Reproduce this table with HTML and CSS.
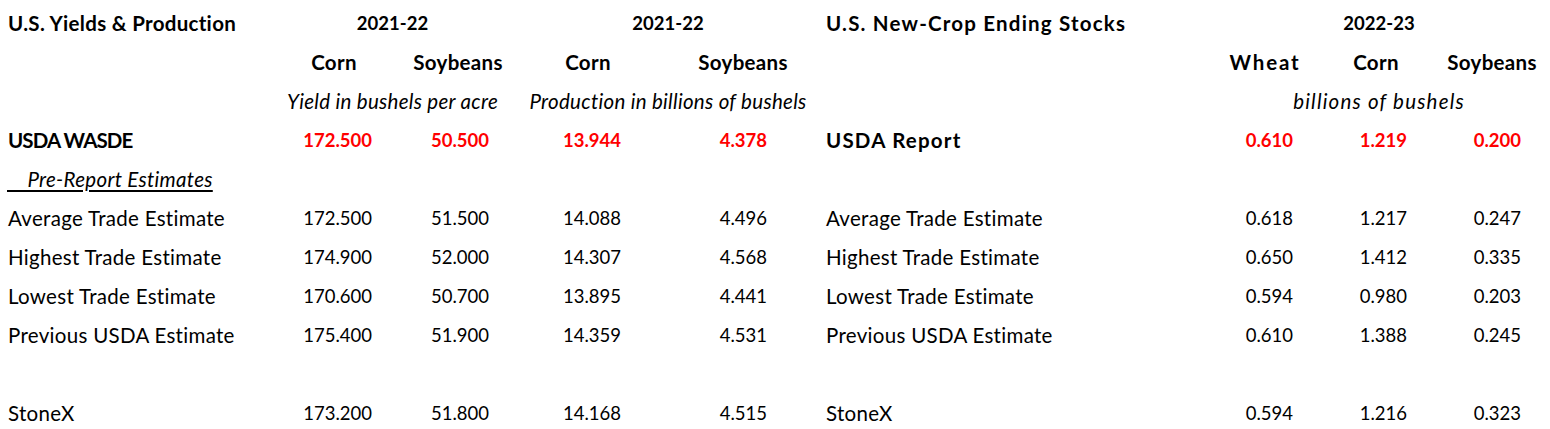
FILE: index.html
```html
<!DOCTYPE html>
<html lang="en">
<head>
<meta charset="utf-8">
<title>U.S. Yields &amp; Production / Ending Stocks</title>
<link rel="stylesheet" href="styles.css">
</head>
<body>
<div class="sheet">
  <div class="row">
    <div class="c-l1 bold">U.S. Yields &amp; Production</div>
    <div class="span-y bold hd yr">2021-22</div>
    <div class="span-p bold hd yr shift">2021-22</div>
    <div class="c-l2 bold wide">U.S. New-Crop Ending Stocks</div>
    <div class="span-s bold hd yr">2022-23</div>
  </div>
  <div class="row">
    <div class="c-y1 bold hd">Corn</div>
    <div class="c-y2 bold hd">Soybeans</div>
    <div class="c-p1 bold hd">Corn</div>
    <div class="c-p2 bold hd">Soybeans</div>
    <div class="c-w bold hd wheat">Wheat</div>
    <div class="c-c bold hd">Corn</div>
    <div class="c-s bold hd">Soybeans</div>
  </div>
  <div class="row">
    <div class="span-y ital hd">Yield in bushels per acre</div>
    <div class="span-p ital hd shift">Production in billions of bushels</div>
    <div class="span-s ital hd loose">billions of bushels</div>
  </div>
  <div class="row report">
    <div class="c-l1 bold tight">USDA WASDE</div>
    <div class="c-y1 num">172.500</div>
    <div class="c-y2 num">50.500</div>
    <div class="c-p1 num">13.944</div>
    <div class="c-p2 num">4.378</div>
    <div class="c-l2 bold loose">USDA Report</div>
    <div class="c-w num">0.610</div>
    <div class="c-c num">1.219</div>
    <div class="c-s num">0.200</div>
  </div>
  <div class="row">
    <div class="c-l1 ital"><span class="pre">    Pre-Report Estimates</span></div>
  </div>
  <div class="row">
    <div class="c-l1">Average Trade Estimate</div>
    <div class="c-y1 num">172.500</div>
    <div class="c-y2 num">51.500</div>
    <div class="c-p1 num">14.088</div>
    <div class="c-p2 num">4.496</div>
    <div class="c-l2">Average Trade Estimate</div>
    <div class="c-w num">0.618</div>
    <div class="c-c num">1.217</div>
    <div class="c-s num">0.247</div>
  </div>
  <div class="row">
    <div class="c-l1">Highest Trade Estimate</div>
    <div class="c-y1 num">174.900</div>
    <div class="c-y2 num">52.000</div>
    <div class="c-p1 num">14.307</div>
    <div class="c-p2 num">4.568</div>
    <div class="c-l2">Highest Trade Estimate</div>
    <div class="c-w num">0.650</div>
    <div class="c-c num">1.412</div>
    <div class="c-s num">0.335</div>
  </div>
  <div class="row">
    <div class="c-l1">Lowest Trade Estimate</div>
    <div class="c-y1 num">170.600</div>
    <div class="c-y2 num">50.700</div>
    <div class="c-p1 num">13.895</div>
    <div class="c-p2 num">4.441</div>
    <div class="c-l2">Lowest Trade Estimate</div>
    <div class="c-w num">0.594</div>
    <div class="c-c num">0.980</div>
    <div class="c-s num">0.203</div>
  </div>
  <div class="row">
    <div class="c-l1">Previous USDA Estimate</div>
    <div class="c-y1 num">175.400</div>
    <div class="c-y2 num">51.900</div>
    <div class="c-p1 num">14.359</div>
    <div class="c-p2 num">4.531</div>
    <div class="c-l2">Previous USDA Estimate</div>
    <div class="c-w num">0.610</div>
    <div class="c-c num">1.388</div>
    <div class="c-s num">0.245</div>
  </div>
  <div class="row"></div>
  <div class="row">
    <div class="c-l1">StoneX</div>
    <div class="c-y1 num">173.200</div>
    <div class="c-y2 num">51.800</div>
    <div class="c-p1 num">14.168</div>
    <div class="c-p2 num">4.515</div>
    <div class="c-l2">StoneX</div>
    <div class="c-w num">0.594</div>
    <div class="c-c num">1.216</div>
    <div class="c-s num">0.323</div>
  </div>
</div>
</body>
</html>
```

FILE: styles.css
```css
html, body {
  margin: 0;
  padding: 0;
  background: #ffffff;
}

body {
  font-family: "Lato", "Open Sans", sans-serif;
  font-size: 20.5px;
  letter-spacing: 0.3px;
  color: #000000;
  overflow: hidden;
}

.sheet {
  padding: 3px 0 0 8px;
}

.row {
  display: grid;
  grid-template-columns: 284px 84px 47px 70px 58px 74px 90px 56px 55px 407px 64px 44px 70px 48px 66px;
  height: 39px;
  align-items: center;
  white-space: nowrap;
}

.c-l1 { grid-column: 1; }
.c-y1 { grid-column: 2; }
.c-y2 { grid-column: 4; }
.c-p1 { grid-column: 6; }
.c-p2 { grid-column: 8; }
.c-l2 { grid-column: 10; }
.c-w  { grid-column: 11; }
.c-c  { grid-column: 13; }
.c-s  { grid-column: 15; }

.span-y { grid-column: 2 / 5; }
.span-p { grid-column: 6 / 9; }
.span-s { grid-column: 11 / 16; }

.bold { font-weight: 700; }
.ital { font-style: italic; }

.hd {
  justify-self: center;
}

.yr {
  font-size: 18.5px;
  letter-spacing: 0;
}

.wide {
  letter-spacing: 1.2px;
}

.wheat {
  letter-spacing: 1.8px;
}

.tight {
  letter-spacing: -0.9px;
}

.loose {
  letter-spacing: 1.2px;
}

.shift {
  padding-left: 14px;
}

.num {
  justify-self: end;
  padding-right: 4px;
  font-size: 18.5px;
  letter-spacing: 0;
}

.report .num {
  color: #ff0000;
  font-weight: 700;
}

.pre {
  white-space: pre;
  margin-left: -1px;
  text-decoration: underline;
  text-decoration-thickness: 2px;
  text-underline-offset: 3px;
}
```
